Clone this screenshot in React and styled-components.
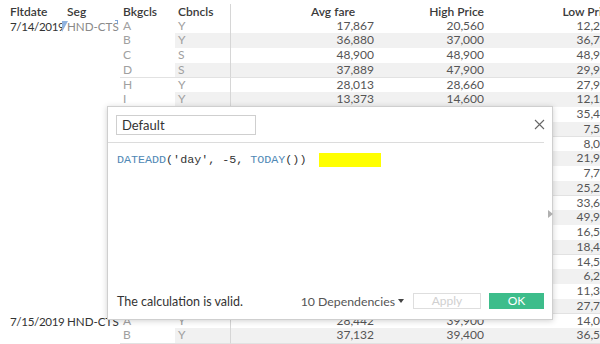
import React from "react";
import styled, { createGlobalStyle } from "styled-components";

const Global = createGlobalStyle`
  html, body { margin: 0; padding: 0; background: #fff; }
  body { width: 600px; height: 344px; overflow: hidden; font-family: Lato, "Open Sans", sans-serif; }
  * { box-sizing: border-box; }
`;

const Page = styled.div`
  position: relative;
  width: 600px;
  height: 344px;
  overflow: hidden;
`;

const COLS = "62px 58px 55px 55px 149px 110px 130px";

const Table = styled.div`
  width: 619px;
`;

const HeadRow = styled.div`
  display: grid;
  grid-template-columns: ${COLS};
  height: 18.5px;
`;

const HeadCell = styled.div`
  font-size: 12px;
  font-weight: 600;
  color: #3a3a3a;
  white-space: nowrap;
  padding-top: ${(p) => (p.$divider ? "0" : "4px")};
  margin-top: ${(p) => (p.$divider ? "4px" : "0")};
  line-height: 15.5px;
  padding-left: ${(p) => (p.$num ? "0" : p.$first ? "10px" : p.$seg ? "5px" : "3px")};
  padding-right: ${(p) => (p.$num ? p.$pr || "5px" : "0")};
  text-align: ${(p) => (p.$num ? "right" : "left")};
  border-bottom: ${(p) => (p.$lined ? "1px solid #e4e4e4" : "none")};
  border-left: ${(p) => (p.$divider ? "1px solid #d6d6d6" : "none")};
`;

const Row = styled.div`
  display: grid;
  grid-template-columns: ${COLS};
  height: 14.76px;
`;

const LeftCell = styled.div`
  position: relative;
  font-size: 11.6px;
  letter-spacing: ${(p) => (p.$first ? "-0.35px" : "0")};
  line-height: 15px;
  white-space: nowrap;
  color: ${(p) => p.$color || "#333"};
  padding-left: ${(p) => (p.$first ? "10px" : "5px")};
`;

const Cell = styled.div`
  font-size: 12px;
  line-height: 14.5px;
  white-space: nowrap;
  border-bottom: 1px solid #e2e2e2;
  background: ${(p) => (p.$band ? "#f1f1f1" : "#fff")};
  color: ${(p) => (p.$num ? "#555" : "#a0a0a0")};
  text-align: ${(p) => (p.$num ? "right" : "left")};
  padding-left: ${(p) => (p.$num ? "0" : "3px")};
  padding-right: ${(p) => (p.$num ? "5px" : "0")};
  border-left: ${(p) => (p.$divider ? "1px solid #d6d6d6" : "none")};
`;

const Flag = styled.span`
  position: absolute;
  left: 0;
  top: 2px;
  width: 0;
  height: 0;
  border-top: 11px solid #8fb2de;
  border-right: 6px solid transparent;
`;

const Tick = styled.span`
  position: absolute;
  right: 2px;
  top: 1px;
  width: 3px;
  height: 4px;
  border-top: 1px solid #7ea6d8;
  border-right: 1px solid #7ea6d8;
`;

/* dialog */
const Dialog = styled.div`
  position: absolute;
  left: 107px;
  top: 106px;
  width: 446px;
  height: 214px;
  background: #fff;
  border: 1px solid #cfcfcf;
  box-shadow: 0 1px 6px rgba(0, 0, 0, 0.18);
  display: flex;
  flex-direction: column;
`;

const DialogHead = styled.div`
  height: 36px;
  margin-right: 8px;
  padding-left: 8px;
  display: flex;
  align-items: center;
  justify-content: space-between;
  border-bottom: 1px solid #dcdcdc;
`;

const NameInput = styled.div`
  width: 140px;
  height: 20px;
  border: 1px solid #cfcfcf;
  font-size: 13px;
  line-height: 18px;
  padding-left: 5px;
  color: #333;
`;

const CloseBtn = styled.svg`
  width: 11px;
  height: 11px;
  margin-right: -1px;
`;

const Editor = styled.div`
  flex: 1;
  position: relative;
  padding: 9px 0 0 9px;
`;

const Code = styled.div`
  display: flex;
  align-items: center;
  font-family: "Liberation Mono", "DejaVu Sans Mono", monospace;
  font-size: 11.7px;
  line-height: 16px;
  color: #333;
  white-space: pre;
`;

const Fn = styled.span`
  color: #4f88b5;
`;

const Highlight = styled.span`
  display: inline-block;
  width: 62px;
  height: 14px;
  background: #ffff00;
  margin-left: 13px;
`;

const ScrollArrow = styled.span`
  position: absolute;
  left: 440px;
  top: 67px;
  width: 0;
  height: 0;
  border-top: 4px solid transparent;
  border-bottom: 4px solid transparent;
  border-left: 5px solid #b0b0b0;
`;

const Footer = styled.div`
  height: 30px;
  margin-bottom: 3px;
  padding: 0 8px 0 9px;
  display: flex;
  align-items: center;
`;

const Status = styled.div`
  font-size: 12.5px;
  color: #333;
  flex: 1;
`;

const Deps = styled.div`
  font-size: 12.3px;
  color: #555;
  margin-right: 9px;
  display: flex;
  align-items: center;
`;

const Caret = styled.span`
  display: inline-block;
  width: 0;
  height: 0;
  margin-left: 3px;
  border-left: 3px solid transparent;
  border-right: 3px solid transparent;
  border-top: 4px solid #444;
`;

const Button = styled.div`
  width: ${(p) => p.$w}px;
  height: 16px;
  margin-left: ${(p) => p.$ml || 0}px;
  font-size: 12px;
  line-height: 14px;
  text-align: center;
  border: 1px solid ${(p) => (p.$primary ? "#3dbd8b" : "#dedede")};
  background: ${(p) => (p.$primary ? "#3dbd8b" : "#fff")};
  color: ${(p) => (p.$primary ? "#fff" : "#d0d0d0")};
`;

const group1 = [
  ["A", "Y", "17,867", "20,560", "12,222"],
  ["B", "Y", "36,880", "37,000", "36,740"],
  ["C", "S", "48,900", "48,900", "48,900"],
  ["D", "S", "37,889", "47,900", "29,900"],
  ["H", "Y", "28,013", "28,660", "27,900"],
  ["I", "Y", "13,373", "14,600", "12,100"],
  ["K", "Y", "36,210", "37,900", "35,400"],
  ["L", "Y", "8,120", "9,400", "7,500"],
  ["M", "Y", "8,640", "9,900", "8,000"],
  ["N", "S", "23,400", "24,900", "21,900"],
  ["O", "Y", "8,210", "9,100", "7,700"],
  ["Q", "Y", "26,400", "27,900", "25,200"],
  ["R", "S", "34,500", "35,900", "33,600"],
  ["S", "S", "49,900", "49,900", "49,900"],
  ["T", "Y", "17,300", "18,900", "16,500"],
  ["U", "Y", "19,200", "20,400", "18,400"],
  ["V", "Y", "15,300", "16,900", "14,500"],
  ["W", "Y", "6,900", "7,800", "6,200"],
  ["X", "Y", "12,100", "13,400", "11,300"],
  ["Z", "S", "28,500", "29,900", "27,700"],
];

const group2 = [
  ["A", "Y", "28,442", "39,900", "14,000"],
  ["B", "Y", "37,132", "39,400", "36,500"],
];

const groups = [
  { date: "7/14/2019", seg: "HND-CTS", segColor: "#8a8a8a", marked: true, rows: group1 },
  { date: "7/15/2019", seg: "HND-CTS", segColor: "#333", marked: false, rows: group2 },
];

function DataRow({ g, r, i }) {
  const band = i % 2 === 1;
  return (
    <Row>
      <LeftCell $first>{i === 0 ? g.date : ""}</LeftCell>
      <LeftCell $color={g.segColor}>
        {i === 0 ? g.seg : ""}
        {i === 0 && g.marked && <Flag />}
        {i === 0 && g.marked && <Tick />}
      </LeftCell>
      <Cell>{r[0]}</Cell>
      <Cell $band={band}>{r[1]}</Cell>
      <Cell $num $band={band} $divider>{r[2]}</Cell>
      <Cell $num $band={band}>{r[3]}</Cell>
      <Cell $num $band={band}>{r[4]}</Cell>
    </Row>
  );
}

export default function App() {
  return (
    <Page>
      <Global />
      <Table>
        <HeadRow>
          <HeadCell $first>Fltdate</HeadCell>
          <HeadCell $seg>Seg</HeadCell>
          <HeadCell $lined>Bkgcls</HeadCell>
          <HeadCell $lined>Cbncls</HeadCell>
          <HeadCell $num $divider $lined $pr="24px">Avg fare</HeadCell>
          <HeadCell $num $lined>High Price</HeadCell>
          <HeadCell $num $lined>Low Price</HeadCell>
        </HeadRow>
        {groups.map((g) =>
          g.rows.map((r, i) => <DataRow key={g.date + i} g={g} r={r} i={i} />)
        )}
      </Table>

      <Dialog>
        <DialogHead>
          <NameInput>Default</NameInput>
          <CloseBtn viewBox="0 0 11 11">
            <path d="M1 1 L10 10 M10 1 L1 10" stroke="#666" strokeWidth="1.1" fill="none" />
          </CloseBtn>
        </DialogHead>
        <Editor>
          <Code>
            <Fn>DATEADD</Fn>('day', -5, <Fn>TODAY</Fn>())
            <Highlight />
          </Code>
          <ScrollArrow />
        </Editor>
        <Footer>
          <Status>The calculation is valid.</Status>
          <Deps>
            10 Dependencies
            <Caret />
          </Deps>
          <Button $w={68}>Apply</Button>
          <Button $w={55} $ml={8} $primary>
            OK
          </Button>
        </Footer>
      </Dialog>
    </Page>
  );
}
